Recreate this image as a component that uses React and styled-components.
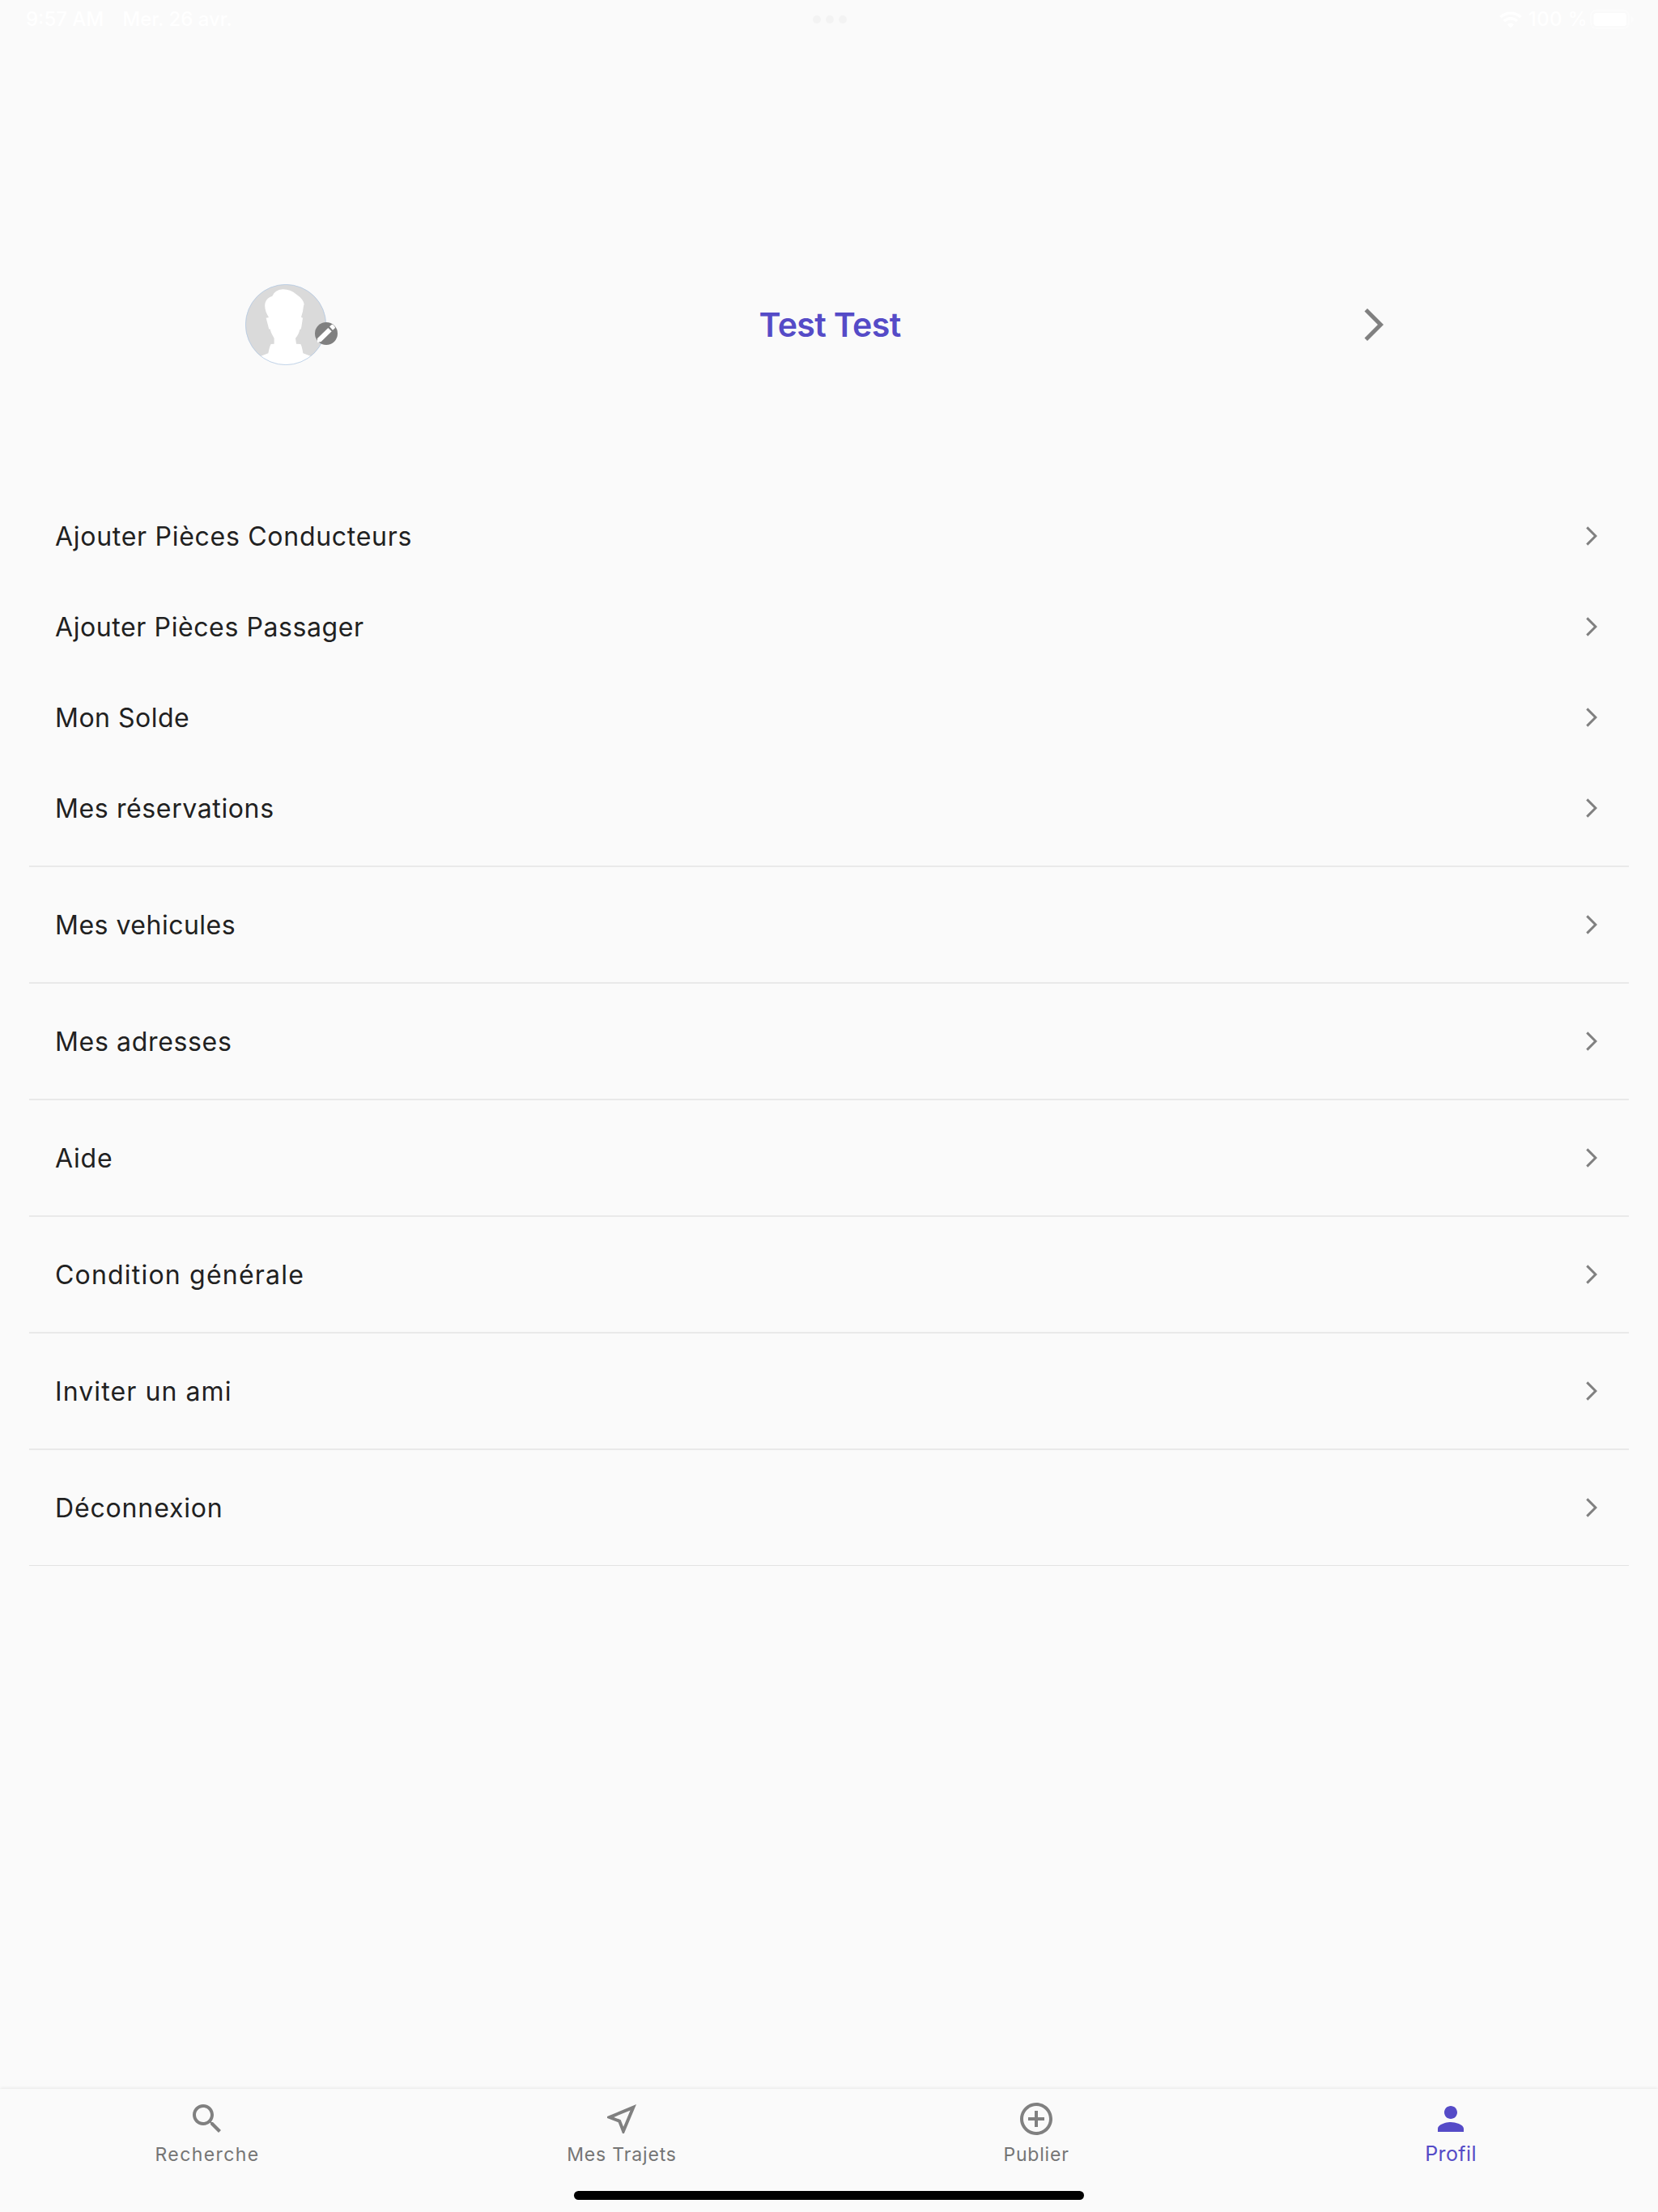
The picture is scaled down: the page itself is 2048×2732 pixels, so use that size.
import React, { useState } from 'react';
import styled, { createGlobalStyle } from 'styled-components';

const GlobalStyle = createGlobalStyle`
  * {
    box-sizing: border-box;
  }
  body {
    margin: 0;
    background: #fafafa;
    color: #212121;
    font-family: Inter, 'Open Sans', sans-serif;
  }
`;

const Screen = styled.div`
  display: flex;
  flex-direction: column;
  height: 2732px;
  background: #fafafa;
`;

const StatusBar = styled.div`
  display: grid;
  grid-template-columns: 1fr auto 1fr;
  align-items: center;
  height: 48px;
  padding: 0 30px 0 32px;
  color: #fff;
  font-size: 24px;
  font-weight: 500;
  line-height: 48px;
`;

const StatusLeft = styled.div`
  display: flex;
  gap: 23px;
`;

const StatusRight = styled.div`
  display: flex;
  align-items: center;
  justify-content: flex-end;
`;

const Percent = styled.span`
  margin: 0 3px 0 8px;
  letter-spacing: 0.4px;
`;

const Dots = styled.div`
  display: flex;
  gap: 6px;

  span {
    width: 10px;
    height: 10px;
    border-radius: 50%;
    background: #f3f3f3;
  }
`;

const Header = styled.header`
  display: grid;
  grid-template-columns: repeat(3, 1fr);
  align-items: center;
  justify-items: center;
  height: 200px;
  margin-top: 253px;
  padding: 0 15px 0 17px;
`;

const AvatarWrap = styled.div`
  position: relative;
  width: 100px;
  height: 100px;
`;

const Badge = styled.svg`
  position: absolute;
  right: -14px;
  top: 47px;
`;

const UserName = styled.h1`
  margin: 0;
  color: #554bc7;
  font-size: 41px;
  font-weight: 600;
  line-height: 60px;
  letter-spacing: -0.6px;
`;

const Menu = styled.ul`
  flex: 1;
  margin: 105px 36px 0;
  padding: 0;
  list-style: none;
`;

const MenuItem = styled.li`
  padding-bottom: ${({ $divider }) => ($divider ? '15px' : '0')};
  margin-bottom: ${({ $divider }) => ($divider ? '15px' : '0')};
  border-bottom: ${({ $divider }) => ($divider ? '2px solid #e9e9e9' : 'none')};

  &:last-child {
    border-bottom: 1px solid #e3e3e3;
  }
`;

const MenuButton = styled.button`
  display: flex;
  align-items: center;
  justify-content: space-between;
  width: 100%;
  height: 112px;
  padding: 0 32px;
  border: none;
  background: none;
  color: #212121;
  font-family: inherit;
  cursor: pointer;
`;

const MenuLabel = styled.span`
  padding-top: 2px;
  font-size: 32px;
  font-weight: 400;
  line-height: 48px;
  letter-spacing: ${({ $tracking }) => $tracking}px;
`;

const TabBar = styled.nav`
  display: grid;
  grid-template-columns: repeat(4, 1fr);
  height: 126px;
  background: #fafafa;
  box-shadow: 0 -1px 4px rgba(0, 0, 0, 0.08);
`;

const Tab = styled.button`
  display: flex;
  flex-direction: column;
  align-items: center;
  padding: 13px 0 0;
  border: none;
  background: none;
  color: ${({ $active }) => ($active ? '#554bc7' : '#808080')};
  font-family: inherit;
  cursor: pointer;
`;

const TabLabel = styled.span`
  margin-top: ${({ $active }) => ($active ? 1 : 2)}px;
  color: ${({ $active }) => ($active ? '#554bc7' : '#757575')};
  font-size: ${({ $active }) => ($active ? 25 : 23)}px;
  font-weight: 400;
  line-height: 36px;
  letter-spacing: ${({ $tracking }) => $tracking}px;
`;

const HomeArea = styled.div`
  display: flex;
  justify-content: center;
  height: 26px;
  background: #fafafa;
  z-index: 1;
`;

const HomeIndicator = styled.div`
  width: 630px;
  height: 11px;
  border-radius: 6px;
  background: #000;
`;

const menuItems = [
  { label: 'Ajouter Pièces Conducteurs', tracking: 0.72 },
  { label: 'Ajouter Pièces Passager', tracking: 0.6 },
  { label: 'Mon Solde', tracking: 0.5 },
  { label: 'Mes réservations', tracking: 0.62, divider: true },
  { label: 'Mes vehicules', tracking: 0.5, divider: true },
  { label: 'Mes adresses', tracking: 0.66, divider: true },
  { label: 'Aide', tracking: 0.8, divider: true },
  { label: 'Condition générale', tracking: 1.2, divider: true },
  { label: 'Inviter un ami', tracking: 1.1, divider: true },
  { label: 'Déconnexion', tracking: 0.85, divider: true },
];

const tabs = [
  {
    label: 'Recherche',
    tracking: 1.4,
    path: 'M15.5 14h-.79l-.28-.27C15.41 12.59 16 11.11 16 9.5 16 5.91 13.09 3 9.5 3S3 5.91 3 9.5 5.91 16 9.5 16c1.61 0 3.09-.59 4.23-1.57l.27.28v.79l5 4.99L20.49 19l-4.99-5zm-6 0C7.01 14 5 11.99 5 9.5S7.01 5 9.5 5 14 7.01 14 9.5 11.99 14 9.5 14z',
  },
  {
    label: 'Mes Trajets',
    tracking: 0.85,
    path: 'M17.27 6.73l-4.24 10.13-1.32-3.42-.32-.83-.82-.32-3.43-1.33 10.13-4.23M21 3L3 10.53v.98l6.84 2.65L12.48 21h.98L21 3z',
  },
  {
    label: 'Publier',
    tracking: 0.8,
    path: 'M13 7h-2v4H7v2h4v4h2v-4h4v-2h-4V7zm-1-5C6.48 2 2 6.48 2 12s4.48 10 10 10 10-4.48 10-10S17.52 2 12 2zm0 18c-4.41 0-8-3.59-8-8s3.59-8 8-8 8 3.59 8 8-3.59 8-8 8z',
  },
  {
    label: 'Profil',
    tracking: 0.4,
    path: 'M12 12c2.21 0 4-1.79 4-4s-1.79-4-4-4-4 1.79-4 4 1.79 4 4 4zm0 2c-2.67 0-8 1.34-8 4v2h16v-2c0-2.66-5.33-4-8-4z',
  },
];

const Chevron = ({ size }) => (
  <svg width={size} height={size} viewBox="0 0 24 24" fill="#808080">
    <path d="M6.23 20.23L8 22l10-10L8 2 6.23 3.77 14.46 12z" />
  </svg>
);

const WifiIcon = () => (
  <svg width="28" height="21" viewBox="0 0 28 21" fill="none" stroke="#fff" strokeWidth="3.6">
    <path d="M1.5 7.3a18 18 0 0 1 25 0" />
    <path d="M6 12a11.5 11.5 0 0 1 16 0" />
    <path d="M14 20.5l-4.2-4.3a6 6 0 0 1 8.4 0z" fill="#fff" stroke="none" />
  </svg>
);

const BatteryIcon = () => (
  <svg width="54" height="24" viewBox="0 0 54 24">
    <rect x="1" y="1" width="47" height="22" rx="6.5" fill="none" stroke="#fcfcfc" strokeWidth="2" />
    <rect x="4.5" y="4" width="40.5" height="16" rx="3.5" fill="#fff" />
    <path d="M50.5 8c2 .6 3.2 2 3.2 4s-1.2 3.4-3.2 4z" fill="#fcfcfc" />
  </svg>
);

const Avatar = () => (
  <svg width="100" height="100" viewBox="70 62 300 300">
    <defs>
      <clipPath id="avatar-clip">
        <circle cx="220" cy="212" r="149.500" />
      </clipPath>
    </defs>
    <circle cx="220" cy="212" r="149.5" fill="#dadada" />
    <path
      clipPath="url(#avatar-clip)"
      fill="#fff"
      d="M120 331L155 318Q160 292 165 284L177 283V262Q163 240 162 228Q157 232 156 222L147 187L157 185Q138 155 144 130Q150 112 170 106Q180 83 208 81Q235 80 260 100Q285 117 288 136L286 142Q284 165 277 184L283 187L278 220Q276 233 272 229Q270 245 256 262L259 283L275 284Q280 292 284 318L320 331V370H120Z"
    />
    <circle cx="220" cy="212" r="148.8" fill="none" stroke="#b4cae4" strokeWidth="2.4" />
  </svg>
);

const App = () => {
  const [activeTab, setActiveTab] = useState('Profil');

  return (
    <>
      <GlobalStyle />
      <Screen>
        <StatusBar>
          <StatusLeft>
            <span>9:57 AM</span>
            <span>Mer. 26 avr.</span>
          </StatusLeft>
          <Dots>
            <span />
            <span />
            <span />
          </Dots>
          <StatusRight>
            <WifiIcon />
            <Percent>100 %</Percent>
            <BatteryIcon />
          </StatusRight>
        </StatusBar>

        <Header>
          <AvatarWrap>
            <Avatar />
            <Badge width="28" height="28" viewBox="328 204 84 84">
              <circle cx="370" cy="246" r="42" fill="#808080" />
              <path d="M337 264L377 225L390 238L351 276L337 279Z" fill="#fff" />
              <path d="M382 220L390 213Q393 211 396 214L402 221Q404 224 402 226L394 233Z" fill="#fff" />
            </Badge>
          </AvatarWrap>
          <UserName>Test Test</UserName>
          <Chevron size={48} />
        </Header>

        <Menu>
          {menuItems.map((item) => (
            <MenuItem key={item.label} $divider={item.divider}>
              <MenuButton>
                <MenuLabel $tracking={item.tracking}>{item.label}</MenuLabel>
                <Chevron size={28} />
              </MenuButton>
            </MenuItem>
          ))}
        </Menu>

        <TabBar>
          {tabs.map((tab) => (
            <Tab
              key={tab.label}
              $active={activeTab === tab.label}
              onClick={() => setActiveTab(tab.label)}
            >
              <svg width="48" height="48" viewBox="0 0 24 24" fill="currentColor">
                <path d={tab.path} />
              </svg>
              <TabLabel $active={activeTab === tab.label} $tracking={tab.tracking}>
                {tab.label}
              </TabLabel>
            </Tab>
          ))}
        </TabBar>
        <HomeArea>
          <HomeIndicator />
        </HomeArea>
      </Screen>
    </>
  );
};

export default App;
